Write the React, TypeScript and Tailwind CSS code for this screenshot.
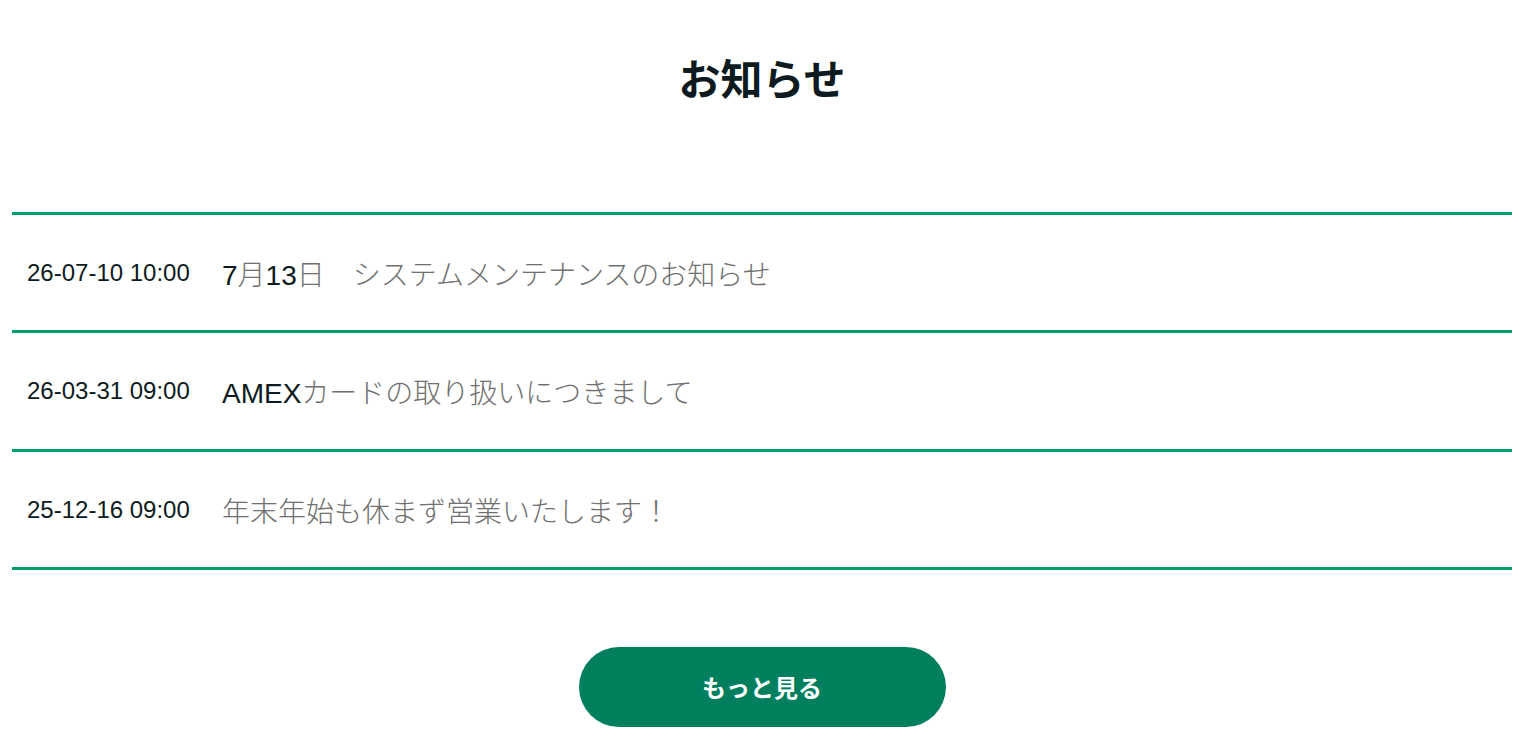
import React from 'react';

const news = [
  { date: '26-07-10 10:00', title: '7月13日　システムメンテナンスのお知らせ' },
  { date: '26-03-31 09:00', title: 'AMEXカードの取り扱いにつきまして' },
  { date: '25-12-16 09:00', title: '年末年始も休まず営業いたします！' },
];

// latin parts render in the dark base font, japanese in a thin grey face
const Title: React.FC<{ text: string }> = ({ text }) => (
  <>
    {text.split(/([\x00-\x7F]+)/).map((part, i) =>
      /^[\x00-\x7F]+$/.test(part) ? (
        <span key={i}>{part}</span>
      ) : (
        <span key={i} className="font-light text-[#707070]">{part}</span>
      )
    )}
  </>
);

const App: React.FC = () => {
  return (
    <div className="min-h-screen bg-white px-3 font-['Liberation_Sans','Noto_Sans_CJK_JP',sans-serif] text-[#0d1b21]">
      <h2 className="pt-[45px] text-center text-[42px] font-bold leading-[63px] font-['Noto_Sans_CJK_JP',sans-serif]">
        お知らせ
      </h2>

      <ul className="mt-[104px] border-t-[3px] border-[#00a06e]">
        {news.map((item, i) => (
          <li
            key={item.date}
            className={`flex items-start border-b-[3px] border-[#00a06e] pt-[40px] ${i === 1 ? 'pb-[34px]' : 'pb-[33px]'}`}
          >
            <span className="w-[210px] shrink-0 pl-[15px] text-[24px] leading-[36px]">{item.date}</span>
            <span className="text-[28px] leading-[42px]">
              <Title text={item.title} />
            </span>
          </li>
        ))}
      </ul>

      <div className="mt-[77px] flex justify-center">
        <button className="h-[80px] w-[367px] rounded-full bg-[#007f5f] text-[24px] font-bold text-white font-['Noto_Sans_CJK_JP',sans-serif]">
          もっと見る
        </button>
      </div>
    </div>
  );
};

export default App;
